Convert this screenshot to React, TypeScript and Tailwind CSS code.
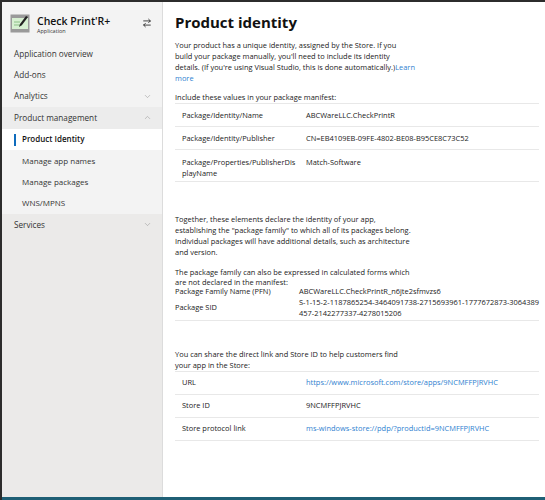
import type { ReactNode } from "react";
import { ArrowRightLeft, ChevronDown, ChevronUp } from "lucide-react";

const font = { fontFamily: '"Open Sans", "Noto Sans", sans-serif' };

function Logo() {
  return (
    <svg width="20" height="19" viewBox="0 0 20 19" aria-hidden="true">
      <rect x="0.5" y="0.5" width="19" height="18" fill="#9a9a9a" />
      <rect x="2" y="4" width="16" height="11" fill="#d7f0d2" />
      <path d="M4 8h6M4 11h8" stroke="#8cbf86" strokeWidth="1" />
      <path d="M9 13l1-3 6-8 2 1-6 8z" fill="#222" />
    </svg>
  );
}

function NavItem({
  label,
  chevron,
  className = "",
}: {
  label: string;
  chevron?: "up" | "down";
  className?: string;
}) {
  return (
    <div className={`flex h-[21.4px] items-center justify-between pl-[12px] pr-[10px] text-[8.2px] text-[#333] ${className}`}>
      <span>{label}</span>
      {chevron === "down" && <ChevronDown className="h-[9px] w-[9px] text-[#999]" strokeWidth={1.5} />}
      {chevron === "up" && <ChevronUp className="h-[9px] w-[9px] text-[#999]" strokeWidth={1.5} />}
    </div>
  );
}

function SubItem({ label, active }: { label: string; active?: boolean }) {
  return (
    <div
      className={`relative flex h-[21.4px] items-center pl-[20px] text-[8px] ${
        active ? "bg-white font-semibold text-[#111]" : "text-[#333]"
      }`}
    >
      {active && <span className="absolute left-[12px] top-[5px] h-[12px] w-[2px] bg-[#0f6cbd]" />}
      {label}
    </div>
  );
}

function Row({ k, v, link, tall }: { k: ReactNode; v: string; link?: boolean; tall?: boolean }) {
  return (
    <div className={`flex border-b border-[#e8e8e8] pl-[7px] ${tall ? "h-[32px] pt-[6.5px]" : "h-[23px] items-center"}`}>
      <div className="w-[124px] shrink-0 whitespace-nowrap leading-[11px]">{k}</div>
      <div className={`whitespace-nowrap leading-[11px] ${link ? "text-[#2f7fd0]" : ""}`}>{v}</div>
    </div>
  );
}

export default function App() {
  return (
    <div
      style={font}
      className="flex h-[500px] w-[545px] flex-col overflow-hidden bg-[#2c2c2c] pl-[2px] pt-[2px]"
    >
      <div className="flex min-h-0 flex-1">
        {/* sidebar */}
        <aside className="flex w-[161px] shrink-0 flex-col border-r border-[#dcdcdc] bg-[#f3f3f3]">
          <div className="flex items-start gap-[7px] pl-[8px] pr-[10px] pt-[12px]">
            <Logo />
            <div className="flex-1 pt-[1px]">
              <div className="text-[10.5px] font-semibold leading-[12px] text-[#111]">Check Print'R+</div>
              <div className="text-[5.5px] leading-[8px] text-[#333]">Application</div>
            </div>
            <ArrowRightLeft className="mt-[4px] h-[10px] w-[10px] text-[#222]" strokeWidth={2} />
          </div>
          <div className="mt-[8px]">
            <NavItem label="Application overview" />
            <NavItem label="Add-ons" />
            <NavItem label="Analytics" chevron="down" />
            <NavItem label="Product management" chevron="up" className="bg-[#ececec]" />
            <SubItem label="Product Identity" active />
            <SubItem label="Manage app names" />
            <SubItem label="Manage packages" />
            <SubItem label="WNS/MPNS" />
          </div>
          <div className="flex-1 bg-[#ebeae9]">
            <NavItem label="Services" chevron="down" />
          </div>
        </aside>

        {/* main */}
        <main className="flex-1 bg-white pl-[12px] pr-[11px] pt-[10px] text-[7.45px] text-[#222]">
          <h1 className="text-[15px] font-bold leading-[20px] text-[#111]">Product identity</h1>
          <p className="mt-[8px] whitespace-nowrap leading-[11px]">
            Your product has a unique identity, assigned by the Store. If you
            <br />
            build your package manually, you'll need to include its identity
            <br />
            details. (If you're using Visual Studio, this is done automatically.)
            <span className="text-[#2f7fd0]">Learn</span>
            <br />
            <span className="text-[#2f7fd0]">more</span>
          </p>
          <p className="mt-[8px] border-b border-[#e8e8e8] leading-[11px]">
            Include these values in your package manifest:
          </p>
          <Row k="Package/Identity/Name" v="ABCWareLLC.CheckPrintR" />
          <Row k="Package/Identity/Publisher" v="CN=EB4109EB-09FE-4802-BE08-B95CE8C73C52" />
          <Row
            k={
              <>
                Package/Properties/PublisherDis
                <br />
                playName
              </>
            }
            v="Match-Software"
            tall
          />

          <p className="mt-[32px] whitespace-nowrap leading-[11px]">
            Together, these elements declare the identity of your app,
            <br />
            establishing the "package family" to which all of its packages belong.
            <br />
            Individual packages will have additional details, such as architecture
            <br />
            and version.
          </p>
          <p className="mt-[9px] whitespace-nowrap leading-[10px]">
            The package family can also be expressed in calculated forms which
            <br />
            are not declared in the manifest:
          </p>
          <div className="flex leading-[9.5px]">
            <div className="w-[124px] shrink-0">Package Family Name (PFN)</div>
            <div>ABCWareLLC.CheckPrintR_n6jte2sfmvzs6</div>
          </div>
          <div className="flex items-center border-b border-[#e8e8e8] pb-[1px] leading-[11px]">
            <div className="w-[124px] shrink-0">Package SID</div>
            <div className="whitespace-nowrap">
              S-1-15-2-1187865254-3464091738-2715693961-1777672873-3064389
              <br />
              457-2142277337-4278015206
            </div>
          </div>

          <p className="mt-[28px] whitespace-nowrap border-b border-[#e8e8e8] leading-[11px]">
            You can share the direct link and Store ID to help customers find
            <br />
            your app in the Store:
          </p>
          <Row k="URL" v="https://www.microsoft.com/store/apps/9NCMFFPJRVHC" link />
          <Row k="Store ID" v="9NCMFFPJRVHC" />
          <Row k="Store protocol link" v="ms-windows-store://pdp/?productid=9NCMFFPJRVHC" link />
        </main>

        {/* window edge */}
        <div className="w-[3px] shrink-0 border-l border-[#8a8a8a] bg-[#ececec]" />
      </div>
      <div className="h-[3px] shrink-0 bg-[#1f5f75]" />
    </div>
  );
}
